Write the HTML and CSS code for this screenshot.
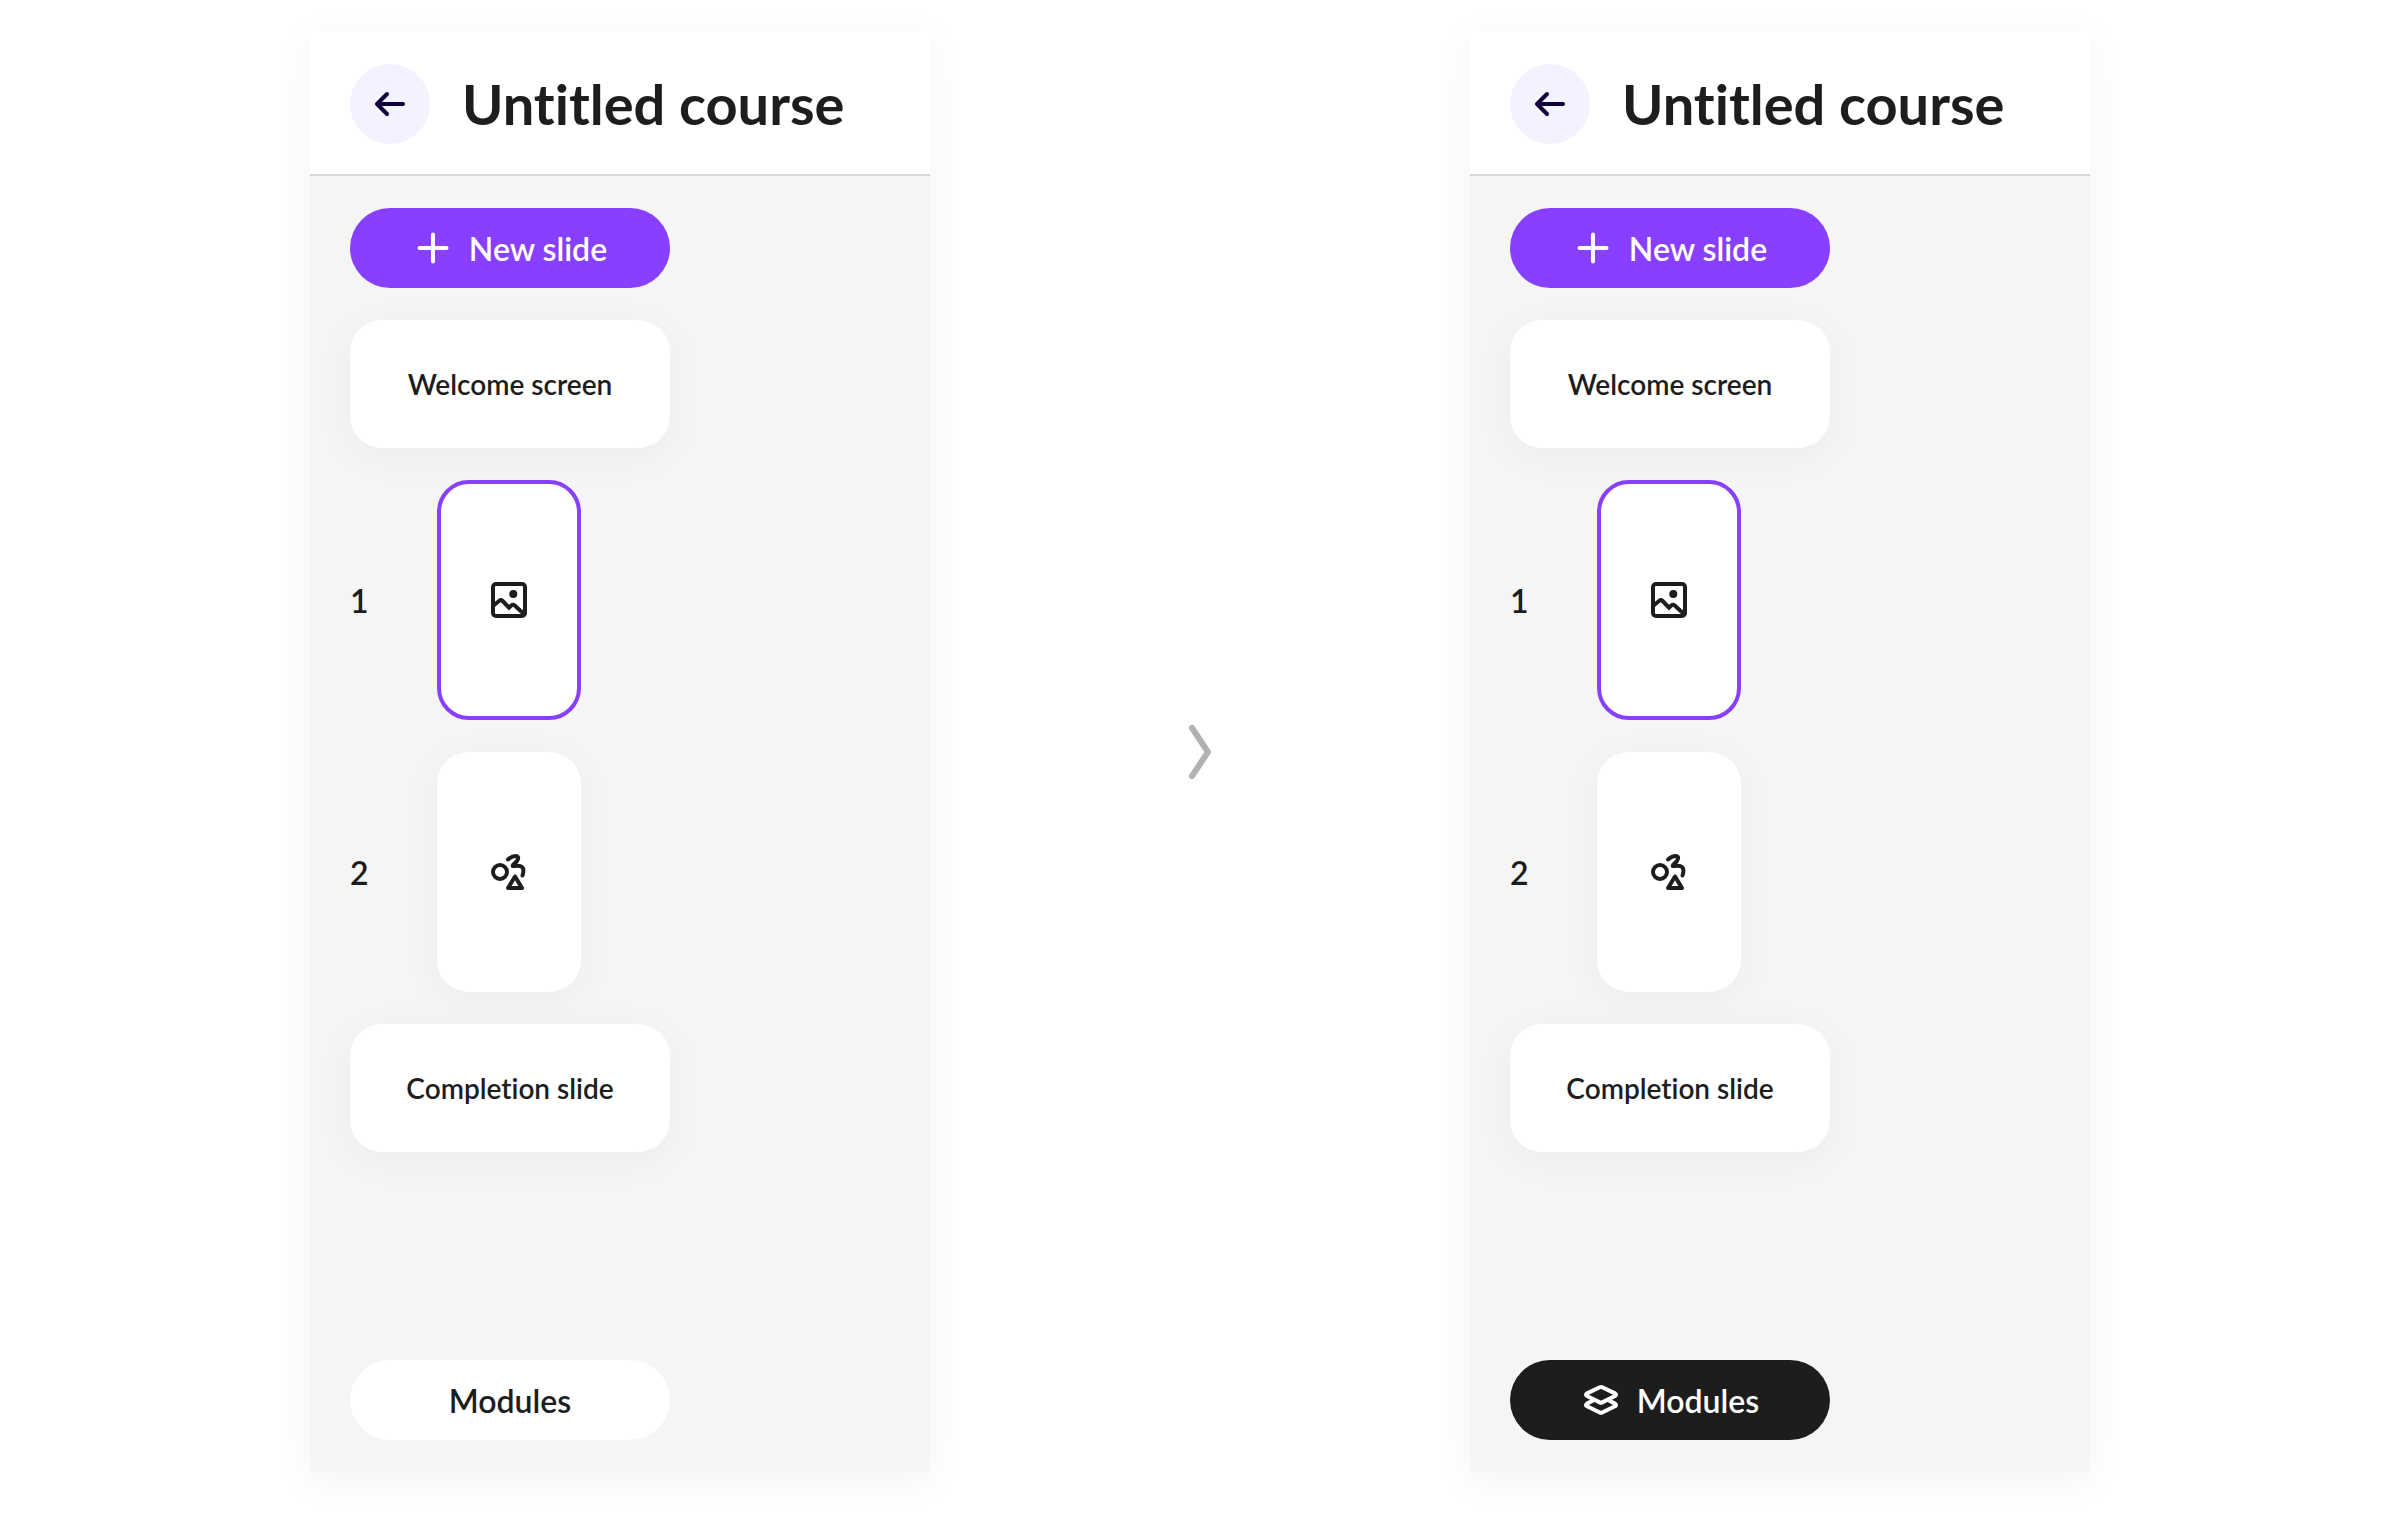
FILE: index.html
```html
<!DOCTYPE html>
<html lang="en">
<head>
    <meta charset="UTF-8">
    <meta name="viewport" content="width=device-width, initial-scale=1.0">
    <title>Untitled course</title>
    <link rel="stylesheet" href="styles.css">
</head>
<body>

    <!-- Icons shared by both panels -->
    <svg class="sprite" aria-hidden="true">
        <symbol id="icon-back" viewBox="0 0 40 40">
            <path d="M33 20H7M17 10L7 20l10 10" stroke-width="4"/>
        </symbol>
        <symbol id="icon-plus" viewBox="0 0 40 40">
            <path d="M20 6.500v27M6.500 20h27" stroke-width="4"/>
        </symbol>
        <symbol id="icon-image" viewBox="0 0 40 40">
            <rect x="4" y="4" width="32" height="32" rx="3" stroke-width="4"/>
            <circle cx="24.300" cy="14" r="4" fill="currentColor" stroke="none"/>
            <path d="M4 26l6-5q2-1.600 3.600 0l6.400 6.700 2.200-2.200q1.800-1.400 3.600 0L36 35" stroke-width="4" stroke-linejoin="miter" stroke-linecap="butt"/>
        </symbol>
        <symbol id="icon-shapes" viewBox="0 0 40 40">
            <circle cx="11" cy="20" r="7" stroke-width="4"/>
            <path d="M19 7.500Q23 4 26.500 4Q31 4.500 28 9L24 13Q23 14.500 25 14Q31 13 33 15Q35.500 17 33.500 23.500" stroke-width="4"/>
            <path d="M26 24.500L33 36H19z" stroke-width="4"/>
        </symbol>
        <symbol id="icon-layers" viewBox="0 0 40 40">
            <path d="M18.800 7.200Q20 6.600 21.200 7.200L34 13.400Q36 14.700 34 16L21.200 22.400Q20 23 18.800 22.400L6 16Q4 14.700 6 13.400z" stroke-width="4"/>
            <path d="M12 20.500L6 23.600Q4 25 6 26.300L18.800 32.500Q20 33.200 21.200 32.500L34 26.300Q36 25 34 23.600L28 20.500" stroke-width="4"/>
        </symbol>
    </svg>

    <main class="compare">
        <section class="panel">
            <header class="panel-header">
                <button class="back" type="button" aria-label="Back"><svg class="icon"><use href="#icon-back"/></svg></button>
                <h1>Untitled course</h1>
            </header>
            <div class="panel-body">
                <button class="btn btn-primary" type="button"><svg class="icon"><use href="#icon-plus"/></svg>New slide</button>
                <button class="card" type="button">Welcome screen</button>
                <div class="slide-row">
                    <span class="number">1</span>
                    <button class="slide selected" type="button" aria-label="Slide 1"><svg class="icon"><use href="#icon-image"/></svg></button>
                </div>
                <div class="slide-row">
                    <span class="number">2</span>
                    <button class="slide" type="button" aria-label="Slide 2"><svg class="icon"><use href="#icon-shapes"/></svg></button>
                </div>
                <button class="card" type="button">Completion slide</button>
                <button class="btn btn-light" type="button">Modules</button>
            </div>
        </section>

        <svg class="chevron" viewBox="0 0 24 56" aria-hidden="true">
            <path d="M4 4l16 24L4 52"/>
        </svg>

        <section class="panel">
            <header class="panel-header">
                <button class="back" type="button" aria-label="Back"><svg class="icon"><use href="#icon-back"/></svg></button>
                <h1>Untitled course</h1>
            </header>
            <div class="panel-body">
                <button class="btn btn-primary" type="button"><svg class="icon"><use href="#icon-plus"/></svg>New slide</button>
                <button class="card" type="button">Welcome screen</button>
                <div class="slide-row">
                    <span class="number">1</span>
                    <button class="slide selected" type="button" aria-label="Slide 1"><svg class="icon"><use href="#icon-image"/></svg></button>
                </div>
                <div class="slide-row">
                    <span class="number">2</span>
                    <button class="slide" type="button" aria-label="Slide 2"><svg class="icon"><use href="#icon-shapes"/></svg></button>
                </div>
                <button class="card" type="button">Completion slide</button>
                <button class="btn btn-dark" type="button"><svg class="icon"><use href="#icon-layers"/></svg>Modules</button>
            </div>
        </section>
    </main>

</body>
</html>
```
FILE: styles.css
```css
* {
    box-sizing: border-box;
}

body {
    margin: 0;
    padding: 32px 32px 48px;
    min-height: 100vh;
    display: flex;
    background-color: #fff;
    color: #1d1d1d;
    font-family: Lato, "Noto Sans", sans-serif;
    font-size: 32px;
    font-weight: 600;
    font-variant-ligatures: none;
}

h1 {
    margin: 0;
    font-size: 56px;
    font-weight: 700;
    line-height: 80px;
    white-space: nowrap;
}

button {
    border: 0;
    padding: 0;
    color: inherit;
    font: inherit;
    font-variant-ligatures: none;
    cursor: pointer;
}

.sprite {
    position: absolute;
    width: 0;
    height: 0;
}

.icon {
    width: 40px;
    height: 40px;
    flex: none;
    fill: none;
    stroke: currentColor;
    stroke-linecap: round;
    stroke-linejoin: round;
}

.compare {
    flex: 1;
    display: grid;
    grid-template-columns: minmax(auto, 620px) minmax(auto, 540px) minmax(auto, 620px);
    justify-content: center;
}

.panel {
    display: flex;
    flex-direction: column;
    background-color: #f5f5f5;
    box-shadow: 0 8px 40px rgba(0, 0, 0, 0.05);
}

.panel-header {
    display: flex;
    gap: 32px;
    padding: 32px 40px 30px;
    background-color: #fff;
    border-bottom: 2px solid #dadada;
}

.panel-body {
    flex: 1;
    display: flex;
    flex-direction: column;
    gap: 32px;
    padding: 32px 40px;
}

.back {
    display: flex;
    align-items: center;
    justify-content: center;
    width: 80px;
    height: 80px;
    border-radius: 50%;
    background-color: #f3f2ff;
    color: #11003c;
}

.btn {
    display: flex;
    align-items: center;
    justify-content: center;
    gap: 16px;
    width: 320px;
    height: 80px;
    border-radius: 40px;
}

.btn-primary {
    background-color: #893fff;
    color: #fff;
}

/* The modules button sits at the foot of the panel */
.btn-light,
.btn-dark {
    margin-top: auto;
}

.btn-light {
    background-color: #fff;
}

.btn-dark {
    background-color: #1d1d1d;
    color: #fff;
}

.card,
.slide {
    border-radius: 32px;
    background-color: #fff;
    box-shadow: 0 8px 40px rgba(0, 0, 0, 0.04);
}

.card {
    width: 320px;
    height: 128px;
    font-size: 28px;
}

.slide-row {
    display: grid;
    grid-template-columns: 87px 144px;
    align-items: center;
}

.slide {
    display: flex;
    align-items: center;
    justify-content: center;
    height: 240px;
}

.selected {
    border: 4px solid #893fff;
    box-shadow: none;
}

.chevron {
    align-self: center;
    justify-self: center;
    width: 24px;
    height: 56px;
    fill: none;
    stroke: #b1b1b1;
    stroke-width: 6;
    stroke-linecap: round;
    stroke-linejoin: round;
}
```
